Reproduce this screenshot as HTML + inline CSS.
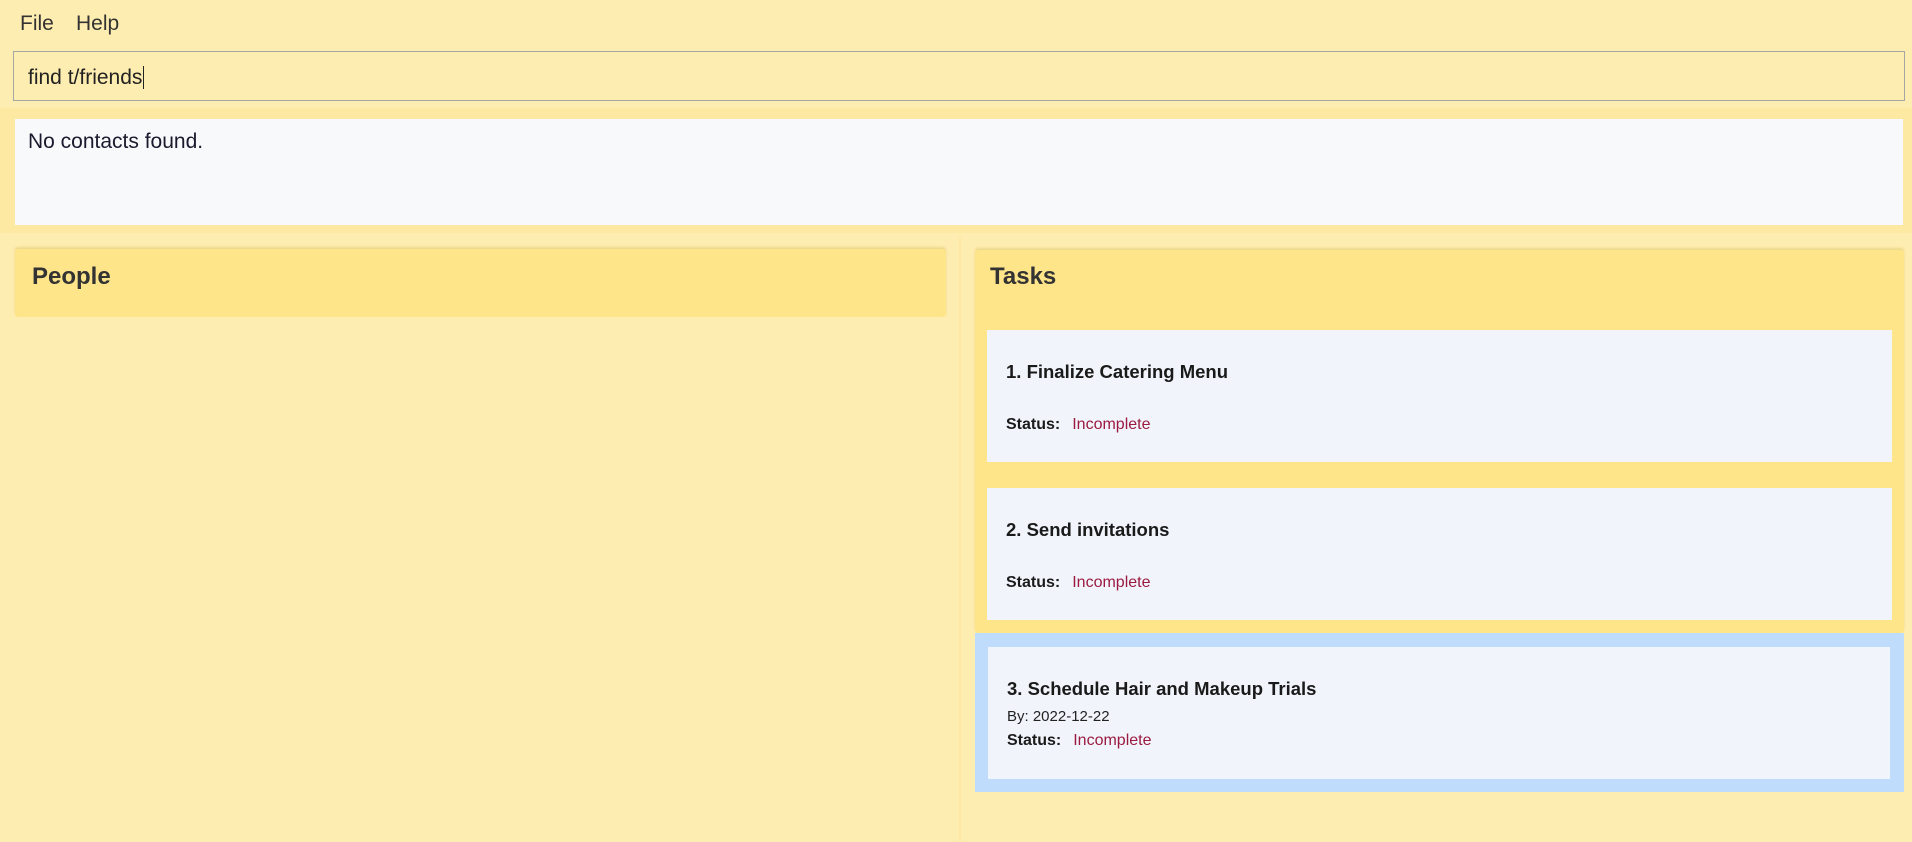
<!DOCTYPE html>
<html><head><style>
*{margin:0;padding:0;box-sizing:border-box}
body{width:1912px;height:842px;background:#feedb0;font-family:"Segoe UI","Liberation Sans",sans-serif;position:relative;overflow:hidden;color:#222}
.a{position:absolute}
.menu{top:12px;font-size:21px;color:#333}
.cmd{left:13px;top:51px;width:1892px;height:50px;border:1.5px solid #a5a5a5;background:#feedb0;font-size:21px;padding:14px 14px 0;color:#222}
.band{left:0;top:108px;width:1912px;height:125px;background:#fee9a2}
.res{left:15px;top:119px;width:1888px;height:106px;background:#f8f9fa;font-size:21px;padding:11px 13px;color:#1a1a2e}
.panel{background:#fee58a;border-radius:3px;box-shadow:0 -2px 2px rgba(200,170,60,.3)}
.h{font-weight:bold;font-size:24px;color:#333}
.card{background:#f1f5fb;left:987px;width:905px;height:132px}
.t{position:absolute;left:19px;font-size:18.5px;font-weight:600;color:#1a1a1a}
.s{position:absolute;left:19px;font-size:16px;font-weight:600;color:#1a1a1a}
.s span{color:#9b1b40;font-weight:normal;margin-left:12px}
.by{position:absolute;left:19px;font-size:15px;color:#222}
</style></head><body>
<div class="a menu" style="left:20px">File</div>
<div class="a menu" style="left:76px">Help</div>
<div class="a cmd">find t/friends<span style="border-left:1.5px solid #222;margin-left:1px"></span></div>
<div class="a band"></div>
<div class="a res">No contacts found.</div>
<div class="a" style="left:959px;top:236px;width:2px;height:606px;background:#fde9a4"></div>
<div class="a panel" style="left:15px;top:249px;width:931px;height:68px"><div class="h a" style="left:17px;top:14px">People</div></div>
<div class="a panel" style="left:975px;top:250px;width:929px;height:383px"><div class="h a" style="left:15px;top:13px">Tasks</div></div>
<div class="a card" style="top:330px"><div class="t" style="top:31px">1. Finalize Catering Menu</div><div class="s" style="top:86px">Status:<span>Incomplete</span></div></div>
<div class="a card" style="top:488px"><div class="t" style="top:31px">2. Send invitations</div><div class="s" style="top:86px">Status:<span>Incomplete</span></div></div>
<div class="a" style="left:975px;top:633px;width:929px;height:159px;background:#c0dcfc"></div>
<div class="a card" style="top:647px;left:988px;width:902px"><div class="t" style="top:31px">3. Schedule Hair and Makeup Trials</div><div class="by" style="top:61px">By: 2022-12-22</div><div class="s" style="top:85px">Status:<span>Incomplete</span></div></div>
</body></html>
